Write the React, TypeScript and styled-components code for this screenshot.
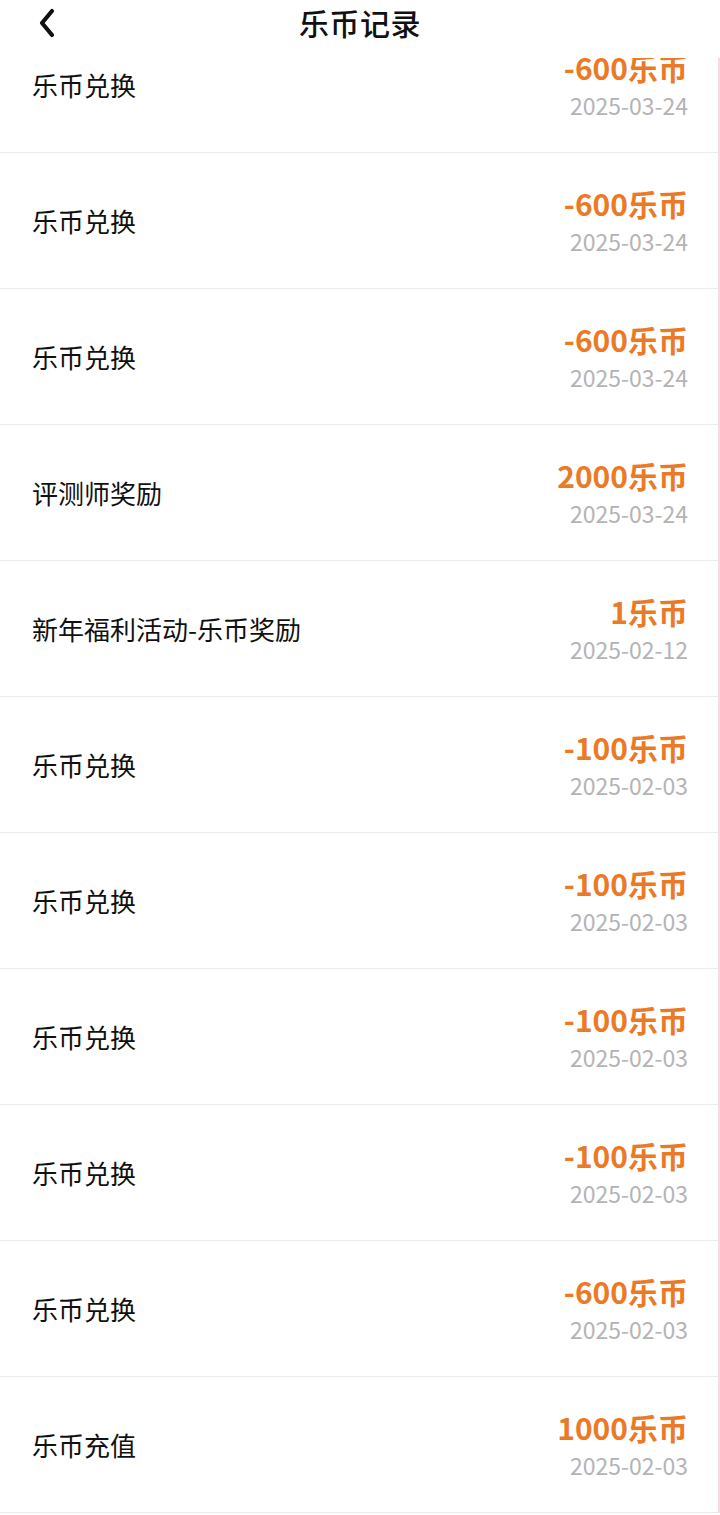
import React from 'react';
import styled, { createGlobalStyle } from 'styled-components';

// global
const GlobalStyle = createGlobalStyle`
  html, body {
    margin: 0;
    padding: 0;
    background: #ffffff;
    font-family: "Noto Sans CJK SC", "Noto Sans", sans-serif;
  }
`;

// styles
const StyledPage = styled.div`
  width: 720px;
  height: 1515px;
  overflow: hidden;
  position: relative;
  background: #ffffff;
`;

const StyledHeader = styled.div`
  position: fixed;
  top: 0;
  left: 0;
  width: 720px;
  height: 58px;
  background: #ffffff;
  z-index: 2;
  display: flex;
  align-items: center;
  justify-content: center;
`;

const StyledBack = styled.div`
  position: absolute;
  left: 32px;
  top: 6px;
  width: 30px;
  height: 34px;
  display: flex;
  align-items: center;
  justify-content: center;
`;

const StyledTitle = styled.div`
  font-size: 30px;
  font-weight: 500;
  color: #111111;
  margin-top: -14px;
  letter-spacing: 0.5px;
`;

const StyledList = styled.div`
  margin-top: 17px;
  border-right: 2px solid #f6dbe3;
`;

const StyledRow = styled.div`
  height: 135px;
  display: flex;
  align-items: center;
  justify-content: space-between;
  padding: 0 30px 0 32px;
  border-bottom: 1px solid #ececec;
`;

const StyledLabel = styled.div`
  font-size: 26px;
  color: #111111;
`;

const StyledRight = styled.div`
  display: flex;
  flex-direction: column;
  align-items: flex-end;
  gap: 6px;
  margin-top: 1px;
`;

const StyledAmount = styled.div`
  font-size: 30px;
  font-weight: 700;
  line-height: 34px;
  color: #ea7a26;
`;

const StyledDate = styled.div`
  font-size: 23px;
  line-height: 30px;
  color: #b4b4b4;
`;

type Record = { label: string; amount: string; date: string };

const records: Record[] = [
    { label: '乐币兑换', amount: '-600乐币', date: '2025-03-24' },
    { label: '乐币兑换', amount: '-600乐币', date: '2025-03-24' },
    { label: '乐币兑换', amount: '-600乐币', date: '2025-03-24' },
    { label: '评测师奖励', amount: '2000乐币', date: '2025-03-24' },
    { label: '新年福利活动-乐币奖励', amount: '1乐币', date: '2025-02-12' },
    { label: '乐币兑换', amount: '-100乐币', date: '2025-02-03' },
    { label: '乐币兑换', amount: '-100乐币', date: '2025-02-03' },
    { label: '乐币兑换', amount: '-100乐币', date: '2025-02-03' },
    { label: '乐币兑换', amount: '-100乐币', date: '2025-02-03' },
    { label: '乐币兑换', amount: '-600乐币', date: '2025-02-03' },
    { label: '乐币充值', amount: '1000乐币', date: '2025-02-03' },
];

const App: React.FC = () => (
    <StyledPage>
        <GlobalStyle />
        <StyledHeader>
            <StyledBack>
                <svg width="20" height="30" viewBox="0 0 20 30">
                    <path d="M15 3 L5 15 L15 27" fill="none" stroke="#111" strokeWidth="4.2" strokeLinecap="round" strokeLinejoin="round" />
                </svg>
            </StyledBack>
            <StyledTitle>乐币记录</StyledTitle>
        </StyledHeader>
        <StyledList>
            {records.map((r, i) => (
                <StyledRow key={i}>
                    <StyledLabel>{r.label}</StyledLabel>
                    <StyledRight>
                        <StyledAmount>{r.amount}</StyledAmount>
                        <StyledDate>{r.date}</StyledDate>
                    </StyledRight>
                </StyledRow>
            ))}
        </StyledList>
    </StyledPage>
);

export default App;
